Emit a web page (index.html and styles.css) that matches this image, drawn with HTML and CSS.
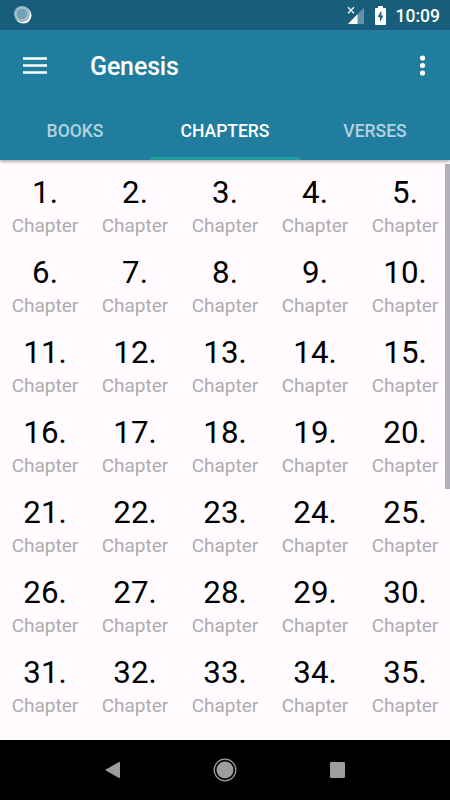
FILE: index.html
```html
<!DOCTYPE html>
<html lang="en">
<head>
  <meta charset="UTF-8" />
  <meta name="viewport" content="width=device-width, initial-scale=1.0"/>
  <title>Genesis</title>
  <link rel="stylesheet" href="styles.css">
</head>
<body>
  <div class="status-bar">
    <svg class="sync" width="18" height="18" viewBox="0 0 18 18">
      <circle cx="9.2" cy="9.3" r="8.3" fill="#fff"/>
      <circle cx="8" cy="8" r="8" fill="#8fb3c3"/>
      <circle cx="8" cy="8" r="6.3" fill="none" stroke="#b4ccd7" stroke-width="2" stroke-dasharray="1 1.2"/>
      <circle cx="8" cy="8" r="5.2" fill="#75a2b6"/>
    </svg>
    <svg class="signal" width="18" height="18" viewBox="0 0 18 18">
      <path d="M17 1.5V18H1z" fill="#6391a5"/>
      <path d="M10.5 8.2V18H1z" fill="#fff"/>
      <path d="M1 1.3l6 6M7 1.3l-6 6" stroke="#fff" stroke-width="1.3"/>
    </svg>
    <svg class="battery" width="11" height="19" viewBox="0 0 11 19">
      <path d="M3 0h5v2h2q1 0 1 1v15q0 1-1 1H1q-1 0-1-1V3q0-1 1-1h2z" fill="#fff"/>
      <path d="M6.3 4.5L2.8 11H5v5l3.4-6.5H6.3z" fill="#185d7b"/>
    </svg>
    <span class="clock">10:09</span>
  </div>

  <header>
    <div class="toolbar">
      <svg class="menu" width="24" height="17" viewBox="0 0 24 17">
        <path d="M0 1.5h24M0 8.5h24M0 15.5h24" stroke="#fff" stroke-width="2.7"/>
      </svg>
      <h1>Genesis</h1>
      <svg class="more" width="6" height="21" viewBox="0 0 6 21">
        <g fill="#fff">
          <circle cx="2.5" cy="3" r="2.6"/>
          <circle cx="2.5" cy="10.5" r="2.6"/>
          <circle cx="2.5" cy="18" r="2.6"/>
        </g>
      </svg>
    </div>
    <nav>
      <a class="tab">BOOKS</a>
      <a class="tab active">CHAPTERS</a>
      <a class="tab">VERSES</a>
    </nav>
  </header>

  <main>
    <div class="chapters" id="chapters"></div>
    <div class="scrollbar"></div>
  </main>

  <footer>
    <svg width="16" height="18" viewBox="0 0 16 18">
      <path d="M14.3 1.7v14.6L1.2 9z" fill="#9e9c9f" stroke="#9e9c9f" stroke-width="1.4" stroke-linejoin="round"/>
    </svg>
    <svg width="24" height="24" viewBox="0 0 24 24">
      <circle cx="12" cy="12" r="10.8" fill="none" stroke="#9e9c9f" stroke-width="1.3"/>
      <circle cx="12" cy="12" r="8.5" fill="#9e9c9f"/>
    </svg>
    <svg width="16" height="16" viewBox="0 0 16 16">
      <rect x="1" width="15" height="16" rx="1" fill="#9e9c9f"/>
    </svg>
  </footer>

  <script>
    const list = document.getElementById("chapters");
    for (let i = 1; i <= 35; i++) {
      const cell = document.createElement("div");
      cell.className = "chapter";
      cell.innerHTML = "<b>" + i + ".</b><span>Chapter</span>";
      list.appendChild(cell);
    }
  </script>
</body>
</html>
```
FILE: styles.css
```css
* {
  box-sizing: border-box;
}
body {
  margin: 0;
  width: 450px;
  height: 800px;
  overflow: hidden;
  display: flex;
  flex-direction: column;
  background: #fffbff;
  font-family: Roboto, sans-serif;
}
.status-bar {
  height: 30px;
  padding: 0 10px 0 14px;
  display: flex;
  align-items: center;
  background: #185d7b;
  color: #fff;
}
.signal {
  margin-left: auto;
}
.battery {
  margin: 0 10px;
}
.clock {
  font-size: 17.5px;
  font-weight: 500;
  line-height: 20px;
  padding-top: 2px;
}
header {
  height: 130px;
  background: #217d9e;
  color: #fff;
  box-shadow: 0 2px 3px rgba(0, 0, 0, 0.3);
  position: relative;
}
.toolbar {
  height: 70px;
  padding: 0 24px 0 23px;
  display: flex;
  align-items: center;
}
h1 {
  margin: 3px auto 0 43px;
  font-size: 25px;
  font-weight: 500;
  line-height: 30px;
  letter-spacing: -0.15px;
}
nav {
  display: flex;
  height: 60px;
}
.tab {
  flex: 1;
  text-align: center;
  font-size: 17.5px;
  font-weight: 500;
  line-height: 62px;
  color: #b2d3df;
}
.tab.active {
  color: #fff;
  box-shadow: inset 0 -3px #1f9e9e;
}
main {
  height: 580px;
  display: grid;
}
.chapters, .scrollbar {
  grid-area: 1 / 1;
}
.chapters {
  display: grid;
  grid-template-columns: repeat(5, 90px);
  grid-auto-rows: 80px;
}
.chapter {
  padding-top: 14px;
  text-align: center;
}
.chapter b, .chapter span {
  display: block;
}
.chapter b {
  font-size: 31.25px;
  font-weight: 400;
  line-height: 37px;
  color: #000;
}
.chapter span {
  font-size: 19px;
  line-height: 29px;
  color: #adabae;
}
.scrollbar {
  justify-self: end;
  width: 5px;
  height: 325px;
  margin-top: 4px;
  background: #b1b0b8;
}
footer {
  height: 60px;
  padding: 0 105px 0 104px;
  display: flex;
  align-items: center;
  justify-content: space-between;
  background: #000;
}
footer svg:first-child {
  margin-right: -1px;
  margin-left: 1px;
}
```
